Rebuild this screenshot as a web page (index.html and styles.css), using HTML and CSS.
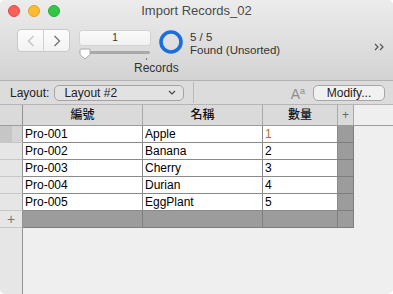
FILE: index.html
```html
<!DOCTYPE html>
<html>
  <head>
    <meta charset="UTF-8">
    <link rel="stylesheet" href="styles.css">
  </head>
  <body>
    <div class="window">
      <div class="chrome">
        <div class="titlebar">
          <div class="lights">
            <span class="light light-close"></span>
            <span class="light light-min"></span>
            <span class="light light-zoom"></span>
          </div>
          <div class="title">Import Records_02</div>
          <div></div>
        </div>
        <div class="toolbar">
          <div class="nav">
            <span class="nav-btn">
              <svg width="8" height="12" viewBox="0 0 8 12"><path d="M6.5 1 L1.5 6 L6.5 11" fill="none" stroke="#c4c4c4" stroke-width="1.4"/></svg>
            </span>
            <span class="nav-btn">
              <svg width="8" height="12" viewBox="0 0 8 12"><path d="M1.5 1 L6.5 6 L1.5 11" fill="none" stroke="#777" stroke-width="1.4"/></svg>
            </span>
          </div>
          <div class="records">
            <div class="record-field">1</div>
            <div class="slider">
              <span class="track"></span>
              <span class="tick"></span>
              <svg class="thumb" width="12" height="12" viewBox="0 0 12 12"><path d="M2 1 H10 Q11 1 11 2 V6.5 L6 11 L1 6.5 V2 Q1 1 2 1 Z" fill="#fff" stroke="#a9a9a9" stroke-width="1"/></svg>
            </div>
            <div class="records-label">Records</div>
          </div>
          <svg class="ring" width="24" height="24" viewBox="0 0 24 24"><circle cx="12" cy="12" r="10" fill="none" stroke="#1a6fdf" stroke-width="3.6"/></svg>
          <div class="found">
            <div>5 / 5</div>
            <div>Found (Unsorted)</div>
          </div>
          <svg class="more" width="11" height="8" viewBox="0 0 11 8"><path d="M1 1 L4 4 L1 7 M6 1 L9 4 L6 7" fill="none" stroke="#555" stroke-width="1.2"/></svg>
        </div>
      </div>

      <div class="layoutbar">
        <span class="layout-label">Layout:</span>
        <div class="select">
          <span>Layout #2</span>
          <svg width="8" height="5" viewBox="0 0 8 5"><path d="M1 1 L4 4 L7 1" fill="none" stroke="#444" stroke-width="1.1"/></svg>
        </div>
        <span class="divider"></span>
        <span class="font-icon">A<sup>a</sup></span>
        <div class="button">Modify...</div>
      </div>

      <div class="content">
        <div class="hrow">
          <div class="g hcell"></div>
          <div class="c1 hcell">編號</div>
          <div class="c2 hcell">名稱</div>
          <div class="c3 hcell">數量</div>
          <div class="c4 hcell plus">+</div>
        </div>
        <div class="row">
          <div class="g g-selected"><span></span><span></span></div>
          <div class="c1 cell">Pro-001</div>
          <div class="c2 cell">Apple</div>
          <div class="c3 cell first-qty">1</div>
          <div class="c4 cell dark"></div>
        </div>
        <div class="row">
          <div class="g"></div>
          <div class="c1 cell">Pro-002</div>
          <div class="c2 cell">Banana</div>
          <div class="c3 cell">2</div>
          <div class="c4 cell dark"></div>
        </div>
        <div class="row">
          <div class="g"></div>
          <div class="c1 cell">Pro-003</div>
          <div class="c2 cell">Cherry</div>
          <div class="c3 cell">3</div>
          <div class="c4 cell dark"></div>
        </div>
        <div class="row">
          <div class="g"></div>
          <div class="c1 cell">Pro-004</div>
          <div class="c2 cell">Durian</div>
          <div class="c3 cell">4</div>
          <div class="c4 cell dark"></div>
        </div>
        <div class="row">
          <div class="g"></div>
          <div class="c1 cell">Pro-005</div>
          <div class="c2 cell">EggPlant</div>
          <div class="c3 cell">5</div>
          <div class="c4 cell dark"></div>
        </div>
        <div class="row">
          <div class="g g-add">+</div>
          <div class="c1 cell dark"></div>
          <div class="c2 cell dark"></div>
          <div class="c3 cell dark"></div>
          <div class="c4 cell dark"></div>
        </div>
        <div class="filler">
          <div class="g g-rest"></div>
        </div>
      </div>
    </div>
  </body>
</html>
```

FILE: styles.css
```css
* {
  box-sizing: border-box;
}
body {
  margin: 0;
  background: #fff;
  font-family: "Liberation Sans", Arial, sans-serif;
  color: #222;
}
.window {
  width: 393px;
  height: 294px;
  border-radius: 5px;
  overflow: hidden;
  background: #efefef;
  display: flex;
  flex-direction: column;
}
.chrome {
  flex: none;
  height: 81px;
  background: linear-gradient(#ececec, #d3d3d3);
  border-bottom: 1px solid #b1b1b1;
}
.titlebar {
  height: 22px;
  display: grid;
  grid-template-columns: 1fr auto 1fr;
  align-items: center;
}
.lights {
  display: flex;
  gap: 8px;
  padding-left: 8px;
}
.light {
  width: 12px;
  height: 12px;
  border-radius: 50%;
}
.light-close {
  background: #fc5f57;
  border: 1px solid #de4a42;
}
.light-min {
  background: #fdbc2e;
  border: 1px solid #dea123;
}
.light-zoom {
  background: #33c748;
  border: 1px solid #27aa35;
}
.title {
  font-size: 13px;
  color: #4a4a4a;
  line-height: 22px;
}
.toolbar {
  height: 58px;
  display: flex;
  align-items: flex-start;
  padding: 7px 0 0 17px;
}
.nav {
  display: flex;
  width: 53px;
  height: 23px;
  background: linear-gradient(#fdfdfd, #f2f2f2);
  border: 1px solid #c9c9c9;
  border-radius: 4px;
  margin-right: 9px;
}
.nav-btn {
  flex: 1;
  display: flex;
  align-items: center;
  justify-content: center;
}
.nav-btn + .nav-btn {
  border-left: 1px solid #d0d0d0;
}
.records {
  width: 72px;
  margin-top: 1px;
  margin-right: 8px;
}
.record-field {
  height: 16px;
  background: linear-gradient(#fafafa, #f1f1f1);
  border: 1px solid #d3d3d3;
  border-radius: 3px;
  font-size: 10px;
  line-height: 14px;
  text-align: center;
  color: #333;
}
.slider {
  position: relative;
  height: 14px;
}
.track {
  position: absolute;
  left: 1px;
  right: 1px;
  top: 5px;
  height: 3px;
  border-radius: 2px;
  background: #a9a9a9;
}
.tick {
  position: absolute;
  left: 67px;
  top: 12px;
  width: 1px;
  height: 2px;
  background: #777;
}
.thumb {
  position: absolute;
  left: 0;
  top: 2px;
}
.records-label {
  margin-left: 55px;
  margin-top: 1px;
  font-size: 12px;
  white-space: nowrap;
  color: #333;
}
.ring {
  flex: none;
  margin-top: 1px;
  margin-right: 7px;
}
.found {
  margin-top: 2px;
  font-size: 11.5px;
  line-height: 13px;
  color: #333;
}
.more {
  margin-left: auto;
  margin-right: 8px;
  margin-top: 14px;
}
.layoutbar {
  flex: none;
  height: 24px;
  display: flex;
  align-items: center;
  padding-left: 10px;
  background: #dcdcdc;
  border-bottom: 1px solid #b6b6b6;
}
.layout-label {
  font-size: 12px;
}
.select {
  width: 130px;
  height: 16px;
  margin-left: 5px;
  display: flex;
  align-items: center;
  justify-content: space-between;
  padding: 0 7px 0 9px;
  font-size: 12px;
  border: 1px solid #a4a4a4;
  border-radius: 5px;
  background: #e2e2e2;
}
.divider {
  width: 1px;
  height: 21px;
  margin-left: 9px;
  background: #b8b8b8;
}
.font-icon {
  margin-left: auto;
  margin-right: 8px;
  font-size: 14px;
  color: #8d8d8d;
  line-height: 14px;
}
.font-icon sup {
  font-size: 9px;
  vertical-align: 5px;
}
.button {
  width: 72px;
  height: 16px;
  margin-right: 8px;
  border: 1px solid #a6a6a6;
  border-radius: 5px;
  background: #f1f1f1;
  font-size: 12px;
  line-height: 14px;
  text-align: center;
}
.content {
  flex: 1;
  display: flex;
  flex-direction: column;
}
.hrow {
  display: flex;
  height: 21px;
  border-bottom: 1px solid #9c9c9c;
}
.row {
  display: flex;
  height: 17px;
}
.g {
  flex: none;
  width: 23px;
  border-right: 1px solid #939393;
  background: #e6e6e6;
}
.row .g {
  border-bottom: 1px solid #c7c7c7;
}
.c1 {
  width: 120px;
}
.c2 {
  width: 120px;
}
.c3 {
  width: 75px;
}
.c4 {
  width: 16px;
}
.hcell {
  background: #dadada;
  border-right: 1px solid #a9a9a9;
  font-family: "Liberation Sans", "Noto Sans CJK TC", sans-serif;
  font-size: 12px;
  font-weight: 500;
  line-height: 20px;
  text-align: center;
  color: #111;
}
.hcell.g {
  border-right-color: #939393;
}
.plus {
  color: #6a6a6a;
  font-size: 12px;
  font-weight: normal;
}
.cell {
  flex: none;
  background: #fff;
  border-right: 1px solid #8a8a8a;
  border-bottom: 1px solid #8a8a8a;
  padding-left: 2px;
  font-size: 12px;
  line-height: 16px;
  color: #000;
}
.cell.dark {
  background: #9c9c9c;
  border-color: #7e7e7e;
}
.first-qty {
  color: #b5741a;
}
.g-selected {
  display: flex;
}
.g-selected span:first-child {
  width: 12px;
  background: #c6c6c6;
}
.g-selected span:last-child {
  flex: 1;
  background: #d5d5d5;
}
.g-add {
  text-align: center;
  font-size: 14px;
  line-height: 16px;
  color: #777;
}
.filler {
  flex: 1;
  display: flex;
}
.g-rest {
  border-bottom: none;
}
```
